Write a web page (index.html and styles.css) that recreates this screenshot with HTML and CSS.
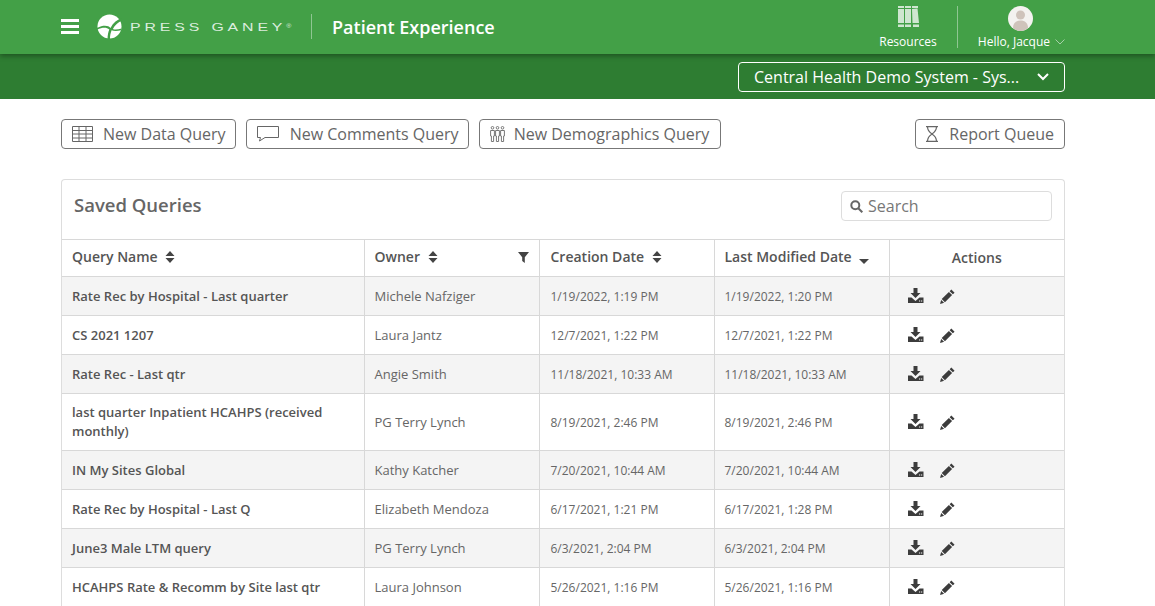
FILE: index.html
```html
<!DOCTYPE html>
<html lang="en">
<head>
<meta charset="utf-8">
<title>Patient Experience</title>
<link rel="stylesheet" href="styles.css">
</head>
<body>
<svg class="defs" width="0" height="0" aria-hidden="true">
  <symbol id="i-sort" viewBox="0 0 10 12"><path d="M5 0 9.500 5H.5zM5 12 .5 7h9z"/></symbol>
  <symbol id="i-dl" viewBox="0 0 16 15"><path d="M5.500 0h4v5h3L7.500 10 2.500 5h3z"/><path d="M0 9.500h3.500L7.500 13 11.500 9.500H15.500V15H0z"/><path d="M11 12.500h1.200v1H11zM13 12.500h1.200v1H13z" fill="#f4f4f4"/></symbol>
  <symbol id="i-pen" viewBox="0 0 14 14"><path d="M10.600.4 13.600 3.400 12 5 9 2zM8.300 2.700l3 3L4.600 12.400 1.600 9.400zM1.100 10.200l2.700 2.700L0 14z"/></symbol>
</svg>
<header class="topbar">
  <button class="burger" aria-label="Menu"><span></span><span></span><span></span></button>
  <div class="logo">
    <svg class="logo-mark" viewBox="0 0 26 26" width="25" height="25"><circle cx="13" cy="13" r="12.500" fill="#fff"/><path d="M0 14.500C7 11 12 12 14 14.500 17 9 21 6 26 4.500L26 7C22 8.500 18.500 11.500 16.500 15.500 18.500 16.500 22 16 25.500 15L25 17C21 18 17.500 18 15.200 17 14 20 13.500 23 13.500 26H11C11 22.500 11.500 19 12.800 16 10 14 6 13.500 0 16.500z" fill="#43a047"/></svg>
    <span class="logo-text">PRESS GANEY<sup>®</sup></span>
  </div>
  <span class="product">Patient Experience</span>
  <div class="top-right">
    <a class="resources">
      <svg width="21" height="21" viewBox="0 0 21 21" fill="#cfe6d0"><path d="M0 0h6v2H0zM7 0h6v2H7zM14 0h6v2h-6zM0 3h6v14H0zM7 3h6v14H7zM14 3l5.500-.5L21 17h-6.500zM0 18.500h6V21H0zM7 18.500h6V21H7zM15 18.500h6V21h-6z"/></svg>
      <span>Resources</span>
    </a>
    <div class="user">
      <svg class="avatar" width="25" height="25" viewBox="0 0 25 25"><circle cx="12.500" cy="12.500" r="12.500" fill="#f4f2f0"/><circle cx="12.500" cy="9" r="4.500" fill="#cfc3bb"/><path d="M5 22c0-5 3-7.500 7.500-7.500S20 17 20 22c-2 1.800-4.500 3-7.500 3S7 23.800 5 22z" fill="#cfc3bb"/></svg>
      <span class="hello">Hello, Jacque <svg width="10" height="6" viewBox="0 0 10 6" fill="none" stroke="#a5d0a7"><path d="M.5.500 5 5 9.500.500"/></svg></span>
    </div>
  </div>
</header>
<div class="subbar">
  <div class="system">
    <span>Central Health Demo System - Sys...</span>
    <svg width="12" height="8" viewBox="0 0 12 8" fill="none" stroke="#fff" stroke-width="2"><path d="M1 1l5 5 5-5"/></svg>
  </div>
</div>
<main class="content">
  <div class="toolbar">
    <button class="btn">
      <svg width="21" height="16" viewBox="0 0 21 16" fill="none" stroke="#666"><path d="M.5.500h20v15H.500zM.5 4.500h20M.5 8h20M.5 12h20M7 .5v15M14 .5v15"/></svg>
      New Data Query
    </button>
    <button class="btn btn-comments">
      <svg width="22" height="16" viewBox="0 0 22 16" fill="none" stroke="#666"><path d="M.5.500h21v11H8L2.500 15 3.500 11.500H.5z"/></svg>
      New Comments Query
    </button>
    <button class="btn btn-demo">
      <svg width="15" height="16" viewBox="0 0 15 16" fill="none" stroke="#777"><circle cx="2.500" cy="1.800" r="1.300"/><circle cx="7.500" cy="1.800" r="1.300"/><circle cx="12.500" cy="1.800" r="1.300"/><path d="M.6 4.500h3.800v5.500H3.600v5.500H1.400V10H.6zM5.600 4.500h3.800v5.500H8.600v5.500H6.400V10H5.600zM10.600 4.500h3.800v5.500h-.8v5.500h-2.200V10h-.8z"/></svg>
      New Demographics Query
    </button>
    <button class="btn btn-queue">
      <svg width="14" height="16" viewBox="0 0 14 16" fill="none" stroke="#666" stroke-width="1.200"><path d="M1 .6h12M1 15.400h12M2.500.6c0 4 1.500 5.500 4.500 7.400 3-1.900 4.500-3.400 4.500-7.400M2.500 15.400C2.500 11.400 4 9.900 7 8c3 1.900 4.500 3.400 4.500 7.400"/></svg>
      Report Queue
    </button>
  </div>
  <section class="card">
    <div class="card-head">
      <h2>Saved Queries</h2>
      <label class="search">
        <svg width="13" height="13" viewBox="0 0 13 13" fill="none" stroke="#666" stroke-width="2"><circle cx="5.300" cy="5.300" r="4"/><path d="M8.300 8.300l4 4"/></svg>
        <span>Search</span>
      </label>
    </div>
    <table>
      <colgroup><col class="c1"><col class="c2"><col class="c3"><col class="c3"><col class="c3"></colgroup>
      <thead>
        <tr>
          <th>Query Name <svg class="sort"><use href="#i-sort"/></svg></th>
          <th><div class="th-owner"><span>Owner <svg class="sort"><use href="#i-sort"/></svg></span><svg class="filter" width="11" height="11" viewBox="0 0 11 11"><path d="M0 0h11L6.800 5.200V11L4.200 9V5.200z"/></svg></div></th>
          <th>Creation Date <svg class="sort"><use href="#i-sort"/></svg></th>
          <th>Last Modified Date <svg class="caret" width="10" height="5" viewBox="0 0 10 5"><path d="M0 0h10L5 5z"/></svg></th>
          <th class="th-actions">Actions</th>
        </tr>
      </thead>
      <tbody>
        <tr><td class="name">Rate Rec by Hospital - Last quarter</td><td>Michele Nafziger</td><td class="date">1/19/2022, 1:19 PM</td><td class="date">1/19/2022, 1:20 PM</td><td class="acts"><svg class="dl"><use href="#i-dl"/></svg><svg class="pen"><use href="#i-pen"/></svg></td></tr>
        <tr><td class="name">CS 2021 1207</td><td>Laura Jantz</td><td class="date">12/7/2021, 1:22 PM</td><td class="date">12/7/2021, 1:22 PM</td><td class="acts"><svg class="dl"><use href="#i-dl"/></svg><svg class="pen"><use href="#i-pen"/></svg></td></tr>
        <tr><td class="name">Rate Rec - Last qtr</td><td>Angie Smith</td><td class="date">11/18/2021, 10:33 AM</td><td class="date">11/18/2021, 10:33 AM</td><td class="acts"><svg class="dl"><use href="#i-dl"/></svg><svg class="pen"><use href="#i-pen"/></svg></td></tr>
        <tr><td class="name">last quarter Inpatient HCAHPS (received monthly)</td><td>PG Terry Lynch</td><td class="date">8/19/2021, 2:46 PM</td><td class="date">8/19/2021, 2:46 PM</td><td class="acts"><svg class="dl"><use href="#i-dl"/></svg><svg class="pen"><use href="#i-pen"/></svg></td></tr>
        <tr><td class="name">IN My Sites Global</td><td>Kathy Katcher</td><td class="date">7/20/2021, 10:44 AM</td><td class="date">7/20/2021, 10:44 AM</td><td class="acts"><svg class="dl"><use href="#i-dl"/></svg><svg class="pen"><use href="#i-pen"/></svg></td></tr>
        <tr><td class="name">Rate Rec by Hospital - Last Q</td><td>Elizabeth Mendoza</td><td class="date">6/17/2021, 1:21 PM</td><td class="date">6/17/2021, 1:28 PM</td><td class="acts"><svg class="dl"><use href="#i-dl"/></svg><svg class="pen"><use href="#i-pen"/></svg></td></tr>
        <tr><td class="name">June3 Male LTM query</td><td>PG Terry Lynch</td><td class="date">6/3/2021, 2:04 PM</td><td class="date">6/3/2021, 2:04 PM</td><td class="acts"><svg class="dl"><use href="#i-dl"/></svg><svg class="pen"><use href="#i-pen"/></svg></td></tr>
        <tr><td class="name">HCAHPS Rate &amp; Recomm by Site last qtr</td><td>Laura Johnson</td><td class="date">5/26/2021, 1:16 PM</td><td class="date">5/26/2021, 1:16 PM</td><td class="acts"><svg class="dl"><use href="#i-dl"/></svg><svg class="pen"><use href="#i-pen"/></svg></td></tr>
      </tbody>
    </table>
  </section>
</main>
</body>
</html>
```

FILE: styles.css
```css
* { box-sizing: border-box; }
html, body { height: 100%; overflow: hidden; }
body { margin: 0; font-family: "Open Sans", sans-serif; color: #555; background: #fff; }
.defs { position: absolute; }

.topbar { height: 54px; background: #43a047; display: flex; align-items: flex-start; padding-left: 61px; color: #fff; position: relative; box-shadow: 0 2px 5px rgba(0,0,0,.35); }
.burger { width: 18px; height: 15px; margin-top: 19px; padding: 0; border: 0; background: none; display: flex; flex-direction: column; justify-content: space-between; }
.burger span { display: block; height: 3px; background: #fff; }
.logo { display: flex; align-items: center; margin: 14px 0 0 18px; width: 214px; height: 25px; }
.logo-mark { flex: none; }
.logo-text { margin: 2px 0 0 8px; font: 400 11.500px "Liberation Sans", sans-serif; letter-spacing: 2.800px; color: #dcedde; white-space: nowrap; line-height: 25px; transform: scaleX(1.380); transform-origin: left center; }
.logo-text sup { font-size: 5px; letter-spacing: 0; line-height: 0; vertical-align: 3px; }
.product { border-left: 1px solid #8fc692; height: 25px; margin-top: 14px; padding-left: 20px; font-size: 18px; font-weight: 600; line-height: 26px; white-space: nowrap; }
.top-right { margin-left: auto; margin-right: 70px; display: flex; height: 54px; }
.resources { width: 80px; display: flex; flex-direction: column; align-items: center; padding-top: 6px; font-size: 12px; font-weight: 400; color: #fff; }
.resources span { margin-top: 7px; line-height: 16px; }
.user { margin-top: 6px; height: 42px; border-left: 1px solid #8fc692; width: 128px; margin-left: 9px; padding-right: 2px; display: flex; flex-direction: column; align-items: center; font-size: 12px; font-weight: 400; color: #fff; }
.avatar { flex: none; }
.hello { margin-top: 3px; line-height: 16px; white-space: nowrap; }
.hello svg { vertical-align: 1px; margin: 0 -2px 0 2px; }

.subbar { height: 45px; background: #2e7d32; display: flex; justify-content: flex-end; align-items: flex-start; padding: 8px 90px 0 0; }
.system { width: 327px; height: 30px; border: 1px solid #fff; border-radius: 4px; color: #fff; display: flex; align-items: center; justify-content: space-between; padding: 0 15px; font-size: 16px; font-weight: 400; white-space: nowrap; }

.content { padding: 20px 90px 0 61px; }
.toolbar { display: flex; gap: 10px; }
.btn { height: 30px; padding: 0 9px 0 10px; border: 1px solid #777; border-radius: 4px; background: #fff; color: #666; font: 400 16px "Open Sans", sans-serif; display: flex; align-items: center; gap: 10px; white-space: nowrap; }
.btn-comments { gap: 11px; }
.btn-demo { gap: 9px; padding-right: 11px; }
.btn-queue { margin-left: auto; gap: 10px; padding: 0 10px 0 9px; }
.card { margin-top: 30px; border: 1px solid #ddd; border-bottom: 0; border-radius: 4px 4px 0 0; }
.card-head { height: 59px; display: flex; justify-content: space-between; padding: 11px 12px 0 12px; }
.card-head h2 { margin: 0; font-size: 18.500px; font-weight: 600; color: #666; line-height: 28px; }
.search { width: 211px; height: 30px; border: 1px solid #ddd; border-radius: 4px; display: flex; align-items: center; gap: 5px; padding-left: 8px; font-size: 16px; color: #777; }

table { width: 100%; border-collapse: collapse; table-layout: fixed; }
.c1 { width: 302px; }
.c2 { width: 175px; }
.c3 { width: 175px; }
th, td { border: 1px solid #d8d8d8; padding: 0 10px; text-align: left; }
tr > :first-child { border-left: 0; }
tr > :last-child { border-right: 0; }
tr > :nth-child(3) { padding-left: 11px; }
th { height: 37px; padding-bottom: 4px; font-size: 14px; font-weight: 600; color: #555; white-space: nowrap; }
td { height: 39px; font-size: 13px; line-height: 19px; color: #666; padding-top: 9px; padding-bottom: 9px; }
tbody tr:nth-child(odd) { background: #f4f4f4; }
td.name { font-weight: 600; color: #555; padding-right: 30px; }
td.date { font-size: 12px; }
.th-owner { display: flex; justify-content: space-between; align-items: center; }
.th-actions { text-align: center; padding-bottom: 2px; }
.sort { width: 10px; height: 12px; margin-left: 4px; fill: #444; vertical-align: -1px; }
.caret { fill: #444; margin-left: 4px; vertical-align: -2px; }
.filter { fill: #444; margin-top: 2px; }
td.acts { padding-left: 18px; padding-top: 7px; padding-bottom: 11px; }
.dl { width: 16px; height: 15px; fill: #3c3c3c; vertical-align: middle; }
.pen { width: 15px; height: 15px; margin-left: 16px; fill: #3c3c3c; vertical-align: -5px; }
```
